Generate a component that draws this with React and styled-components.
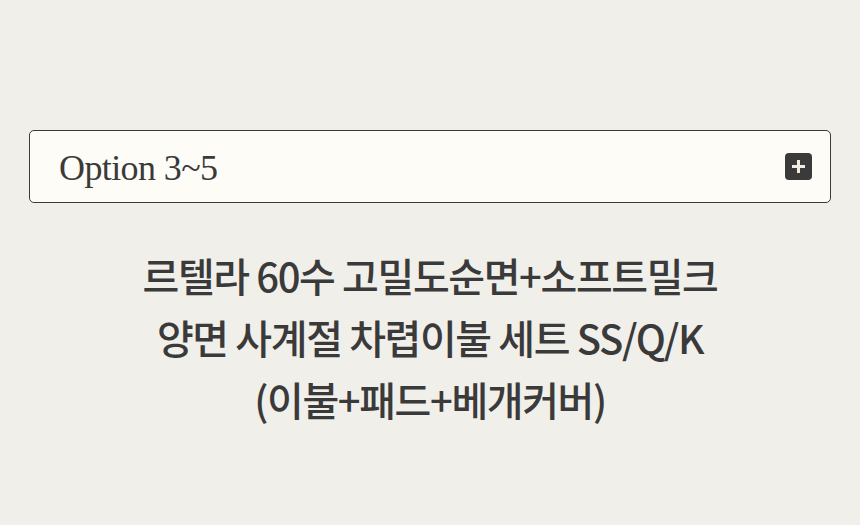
import React from "react";
import styled, { createGlobalStyle } from "styled-components";

const Global = createGlobalStyle`
  html, body { margin: 0; padding: 0; background: #f1efea; }
  body { font-family: "Noto Sans CJK KR", "Noto Sans", sans-serif; }
`;

const Page = styled.div`
  width: 860px;
  height: 525px;
  box-sizing: border-box;
  padding: 130px 29px 0;
  background: #f1efea;
  display: flex;
  flex-direction: column;
`;

const OptionBar = styled.div`
  height: 73px;
  box-sizing: border-box;
  border: 1px solid #3b3b3b;
  border-radius: 5px;
  background: #fefcf6;
  display: flex;
  align-items: center;
  justify-content: space-between;
  padding: 0 18px 0 29px;
`;

const OptionLabel = styled.span`
  font-family: "Liberation Serif", "DejaVu Serif", serif;
  font-size: 36px;
  letter-spacing: -0.6px;
  color: #3a3a3a;
  line-height: 1;
  padding-top: 2px;
`;

const PlusBox = styled.span`
  width: 27px;
  height: 27px;
  border-radius: 4px;
  background: #3a3a3a;
  display: flex;
  align-items: center;
  justify-content: center;
`;

const Title = styled.h1`
  margin: 41px 0 0;
  text-align: center;
  font-family: "Noto Sans CJK KR", sans-serif;
  font-weight: 500;
  font-size: 40px;
  line-height: 62px;
  letter-spacing: -1.4px;
  color: #3a3a3a;
`;

export default function App() {
  return (
    <>
      <Global />
      <Page>
        <OptionBar>
          <OptionLabel>Option 3~5</OptionLabel>
          <PlusBox>
            <svg width="15" height="15" viewBox="0 0 15 15">
              <path d="M7.5 1v13M1 7.5h13" stroke="#f1ede3" strokeWidth="3" />
            </svg>
          </PlusBox>
        </OptionBar>
        <Title>
          르텔라 60수 고밀도순면+소프트밀크
          <br />
          양면 사계절 차렵이불 세트 SS/Q/K
          <br />
          (이불+패드+베개커버)
        </Title>
      </Page>
    </>
  );
}
